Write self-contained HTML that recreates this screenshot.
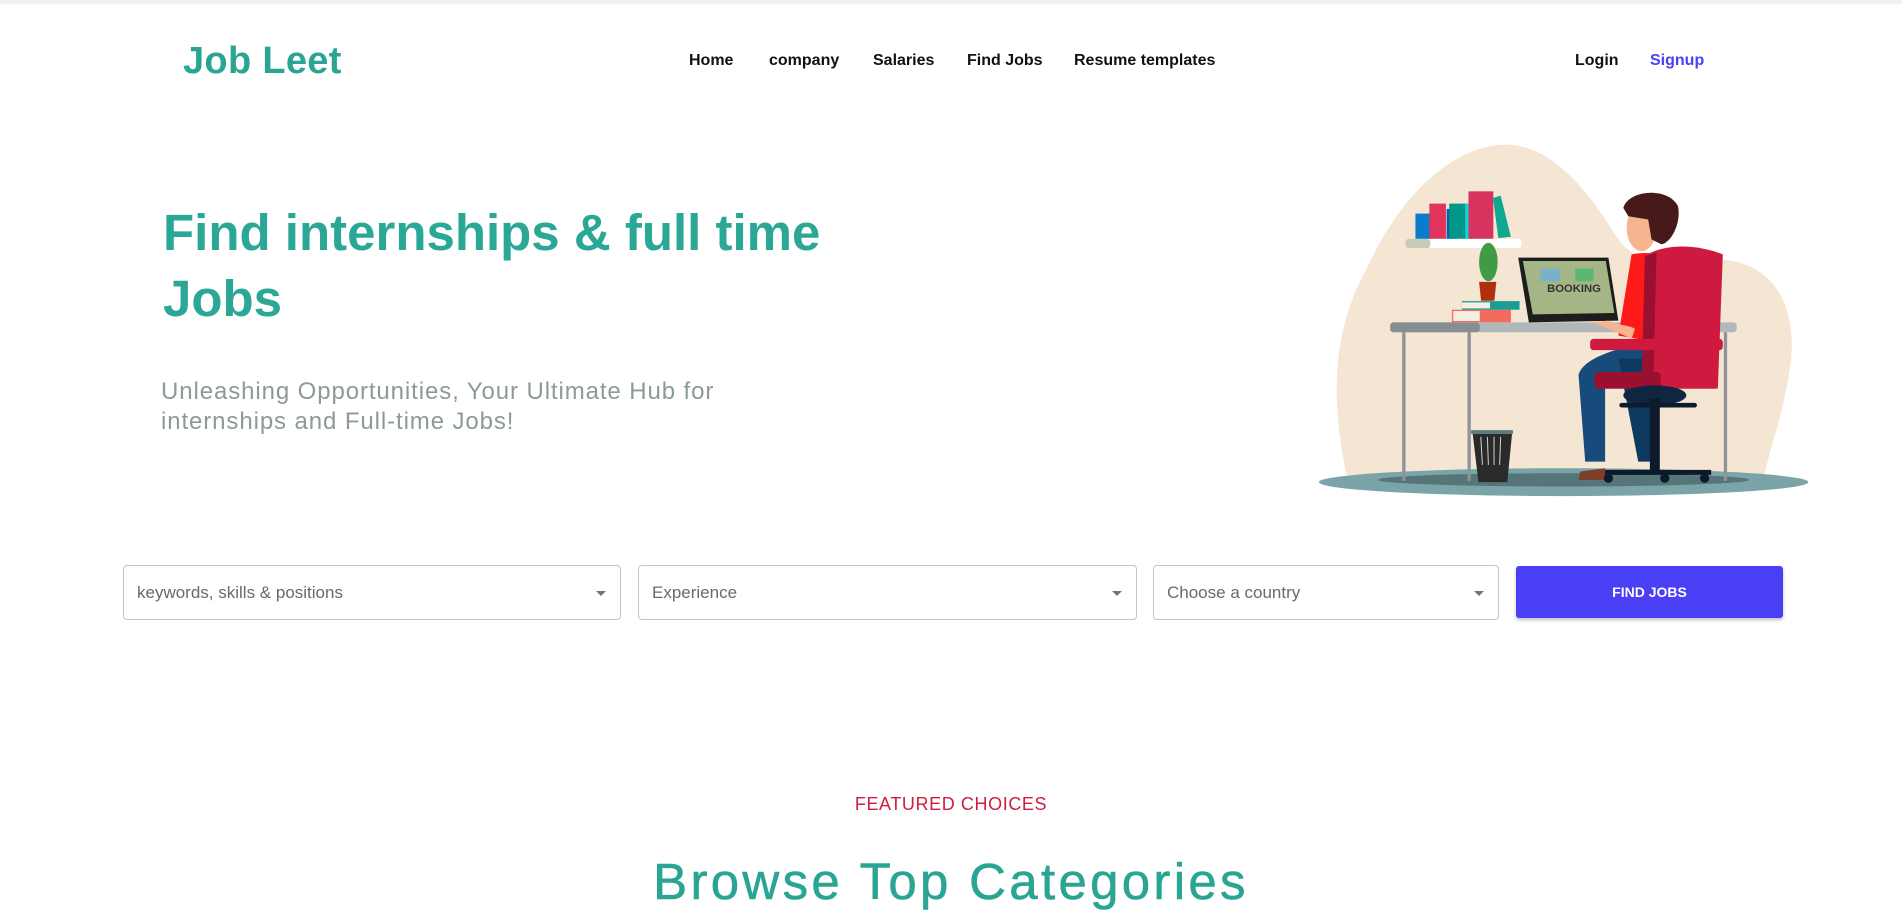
<!DOCTYPE html>
<html><head><meta charset="utf-8"><style>
*{margin:0;padding:0;box-sizing:border-box}
body{width:1902px;height:920px;overflow:hidden;background:#fff;font-family:"Liberation Sans",sans-serif;position:relative}
.abs{position:absolute;white-space:nowrap}
.topbar{position:absolute;left:0;top:0;width:1902px;height:4px;background:#f0f1f3}
.logo{left:183px;top:38px;font-size:38px;font-weight:bold;color:#2ba593;line-height:46px;letter-spacing:.3px}
.nav{top:51px;font-size:16px;font-weight:bold;color:#111;line-height:20px}
h1{position:absolute;left:163px;top:200px;font-size:51px;line-height:66px;color:#2aa795;font-weight:bold}
.sub{left:161px;top:377px;font-size:24px;line-height:30px;color:#8d9a9a;letter-spacing:.9px}
.box{position:absolute;top:565px;height:55px;border:1px solid #c4c4c4;border-radius:4px;background:#fff}
.box span{position:absolute;left:13px;top:17px;font-size:17px;color:#6a6a6a}
.box i{position:absolute;right:14px;top:25px;border-left:5px solid transparent;border-right:5px solid transparent;border-top:5px solid #757575}
.btn{position:absolute;left:1516px;top:566px;width:267px;height:52px;background:#4a3ff5;border-radius:3px;color:#fff;font-size:14px;font-weight:bold;text-align:center;line-height:52px;box-shadow:0 2px 3px rgba(0,0,0,.25)}
.feat{left:0;width:1902px;text-align:center;top:794px;font-size:18px;color:#cc1f3e;letter-spacing:.6px}
.browse{left:0;width:1902px;text-align:center;top:853px;font-size:51px;color:#2ba593;letter-spacing:3.3px;line-height:58px;-webkit-text-stroke:.6px #2ba593}
</style></head><body>
<div class="topbar"></div>
<div class="abs logo">Job Leet</div>
<div class="abs nav" style="left:689px">Home</div>
<div class="abs nav" style="left:769px">company</div>
<div class="abs nav" style="left:873px">Salaries</div>
<div class="abs nav" style="left:967px">Find Jobs</div>
<div class="abs nav" style="left:1074px">Resume templates</div>
<div class="abs nav" style="left:1575px">Login</div>
<div class="abs nav" style="left:1650px;color:#4a3ff5">Signup</div>
<h1>Find internships &amp; full time<br>Jobs</h1>
<div class="abs sub">Unleashing Opportunities, Your Ultimate Hub for<br>internships and Full-time Jobs!</div>

<svg style="position:absolute;left:1300px;top:130px" width="520" height="380" viewBox="0 0 1568 1146">
<path d="M140 1040 C90 800 100 600 200 420 C300 200 450 60 600 45 C760 30 880 200 960 330 C1020 410 1100 390 1250 390 C1420 390 1500 520 1480 700 C1460 850 1420 950 1400 1040 Z" fill="#f5e6d3"/>
<ellipse cx="795" cy="1062" rx="738" ry="42" fill="#7ba4a9"/>
<ellipse cx="795" cy="1055" rx="560" ry="20" fill="#557579"/>
<rect x="318" y="328" width="350" height="28" rx="10" fill="#fff"/>
<rect x="318" y="328" width="75" height="28" rx="10" fill="#c9cbb8"/>
<rect x="348" y="252" width="50" height="76" fill="#0a7ccc"/>
<rect x="390" y="222" width="50" height="106" fill="#e0345c"/>
<rect x="442" y="238" width="28" height="90" fill="#0f5ea8"/>
<rect x="450" y="222" width="50" height="106" fill="#009688"/>
<rect x="498" y="222" width="26" height="106" fill="#14d3d8"/>
<rect x="508" y="185" width="75" height="143" fill="#d6335e"/>
<polygon points="582,205 605,198 636,322 598,326" fill="#11a890"/>
<rect x="458" y="542" width="178" height="38" fill="#f26b5c"/>
<rect x="488" y="516" width="174" height="26" fill="#1a9e94"/>
<rect x="488" y="520" width="85" height="18" fill="#f4efe0"/>
<rect x="462" y="546" width="80" height="30" fill="#f4efe0"/>
<path d="M540 458 L592 458 L586 515 L546 515 Z" fill="#b0300e"/>
<ellipse cx="568" cy="398" rx="28" ry="58" fill="#3f9b45"/>
<rect x="272" y="580" width="1045" height="30" rx="10" fill="#b2b7b9"/>
<rect x="272" y="580" width="270" height="30" rx="10" fill="#858e91"/>
<g stroke="#8c9497" stroke-width="10"><line x1="313" y1="610" x2="313" y2="1058"/><line x1="510" y1="610" x2="510" y2="1058"/><line x1="1283" y1="610" x2="1283" y2="1058"/></g>
<path d="M520 910 L640 910 L625 1062 L538 1062 Z" fill="#2a2a2a"/>
<g stroke="#cfd6d6" stroke-width="3"><line x1="545" y1="925" x2="550" y2="1010"/><line x1="565" y1="925" x2="568" y2="1010"/><line x1="585" y1="925" x2="585" y2="1010"/><line x1="605" y1="925" x2="602" y2="1010"/></g>
<rect x="516" y="905" width="126" height="12" fill="#607a80"/>
<path d="M658 385 L930 385 L960 575 L690 580 Z" fill="#1d1d1d"/>
<path d="M672 395 L922 395 L948 552 L702 556 Z" fill="#a5b686"/>
<text x="745" y="488" font-family="Liberation Sans,sans-serif" font-size="34" font-weight="bold" fill="#333">BOOKING</text>
<rect x="725" y="418" width="60" height="38" fill="#7ab0c8"/><rect x="830" y="418" width="55" height="38" fill="#5bb870"/>
<path d="M1040 640 C950 660 850 690 840 740 L860 1000 L920 1000 L920 760 L1040 720 Z" fill="#174b7c"/>
<path d="M960 690 L1060 690 L1060 1000 L1020 1000 Z" fill="#0e3a60"/>
<path d="M845 1030 L920 1020 L920 1055 L840 1055 Z" fill="#7b4026"/>
<path d="M1000 375 C1080 360 1110 390 1110 430 L1080 640 L960 620 Z" fill="#ff1a1a"/>
<ellipse cx="1030" cy="295" rx="45" ry="70" fill="#f6b48f"/>
<path d="M975 235 C990 180 1110 170 1140 230 C1150 280 1120 340 1090 345 L1060 330 L1050 270 L990 260 Z" fill="#48191a"/>
<path d="M930 575 C960 590 1000 590 1010 600 L1000 630 C960 610 930 600 880 580 Z" fill="#f6b48f"/>
<path d="M1040 380 C1100 340 1200 345 1275 375 L1260 780 L1030 780 Z" fill="#cf1a40"/>
<path d="M1040 380 L1075 370 L1065 780 L1030 780 Z" fill="#9b0f30"/>
<rect x="875" y="630" width="400" height="34" rx="10" fill="#cf1a40"/>
<rect x="888" y="730" width="372" height="50" rx="12" fill="#cf1a40"/>
<rect x="888" y="730" width="200" height="50" rx="12" fill="#9b0f30"/>
<ellipse cx="1070" cy="800" rx="95" ry="30" fill="#0f2540"/>
<rect x="1055" y="810" width="30" height="220" fill="#0d1a2c"/>
<path d="M920 1040 L1240 1040 L1240 1025 L920 1025 Z" fill="#0d1a2c"/>
<circle cx="930" cy="1050" r="14" fill="#0d1a2c"/><circle cx="1100" cy="1050" r="14" fill="#0d1a2c"/><circle cx="1220" cy="1050" r="14" fill="#0d1a2c"/>
<path d="M970 830 L1190 830" stroke="#0d1a2c" stroke-width="14" stroke-linecap="round"/>
</svg>

<div class="box" style="left:123px;width:498px"><span>keywords, skills &amp; positions</span><i></i></div>
<div class="box" style="left:638px;width:499px"><span>Experience</span><i></i></div>
<div class="box" style="left:1153px;width:346px"><span>Choose a country</span><i></i></div>
<div class="btn">FIND JOBS</div>
<div class="abs feat">FEATURED CHOICES</div>
<div class="abs browse">Browse Top Categories</div>
</body></html>
